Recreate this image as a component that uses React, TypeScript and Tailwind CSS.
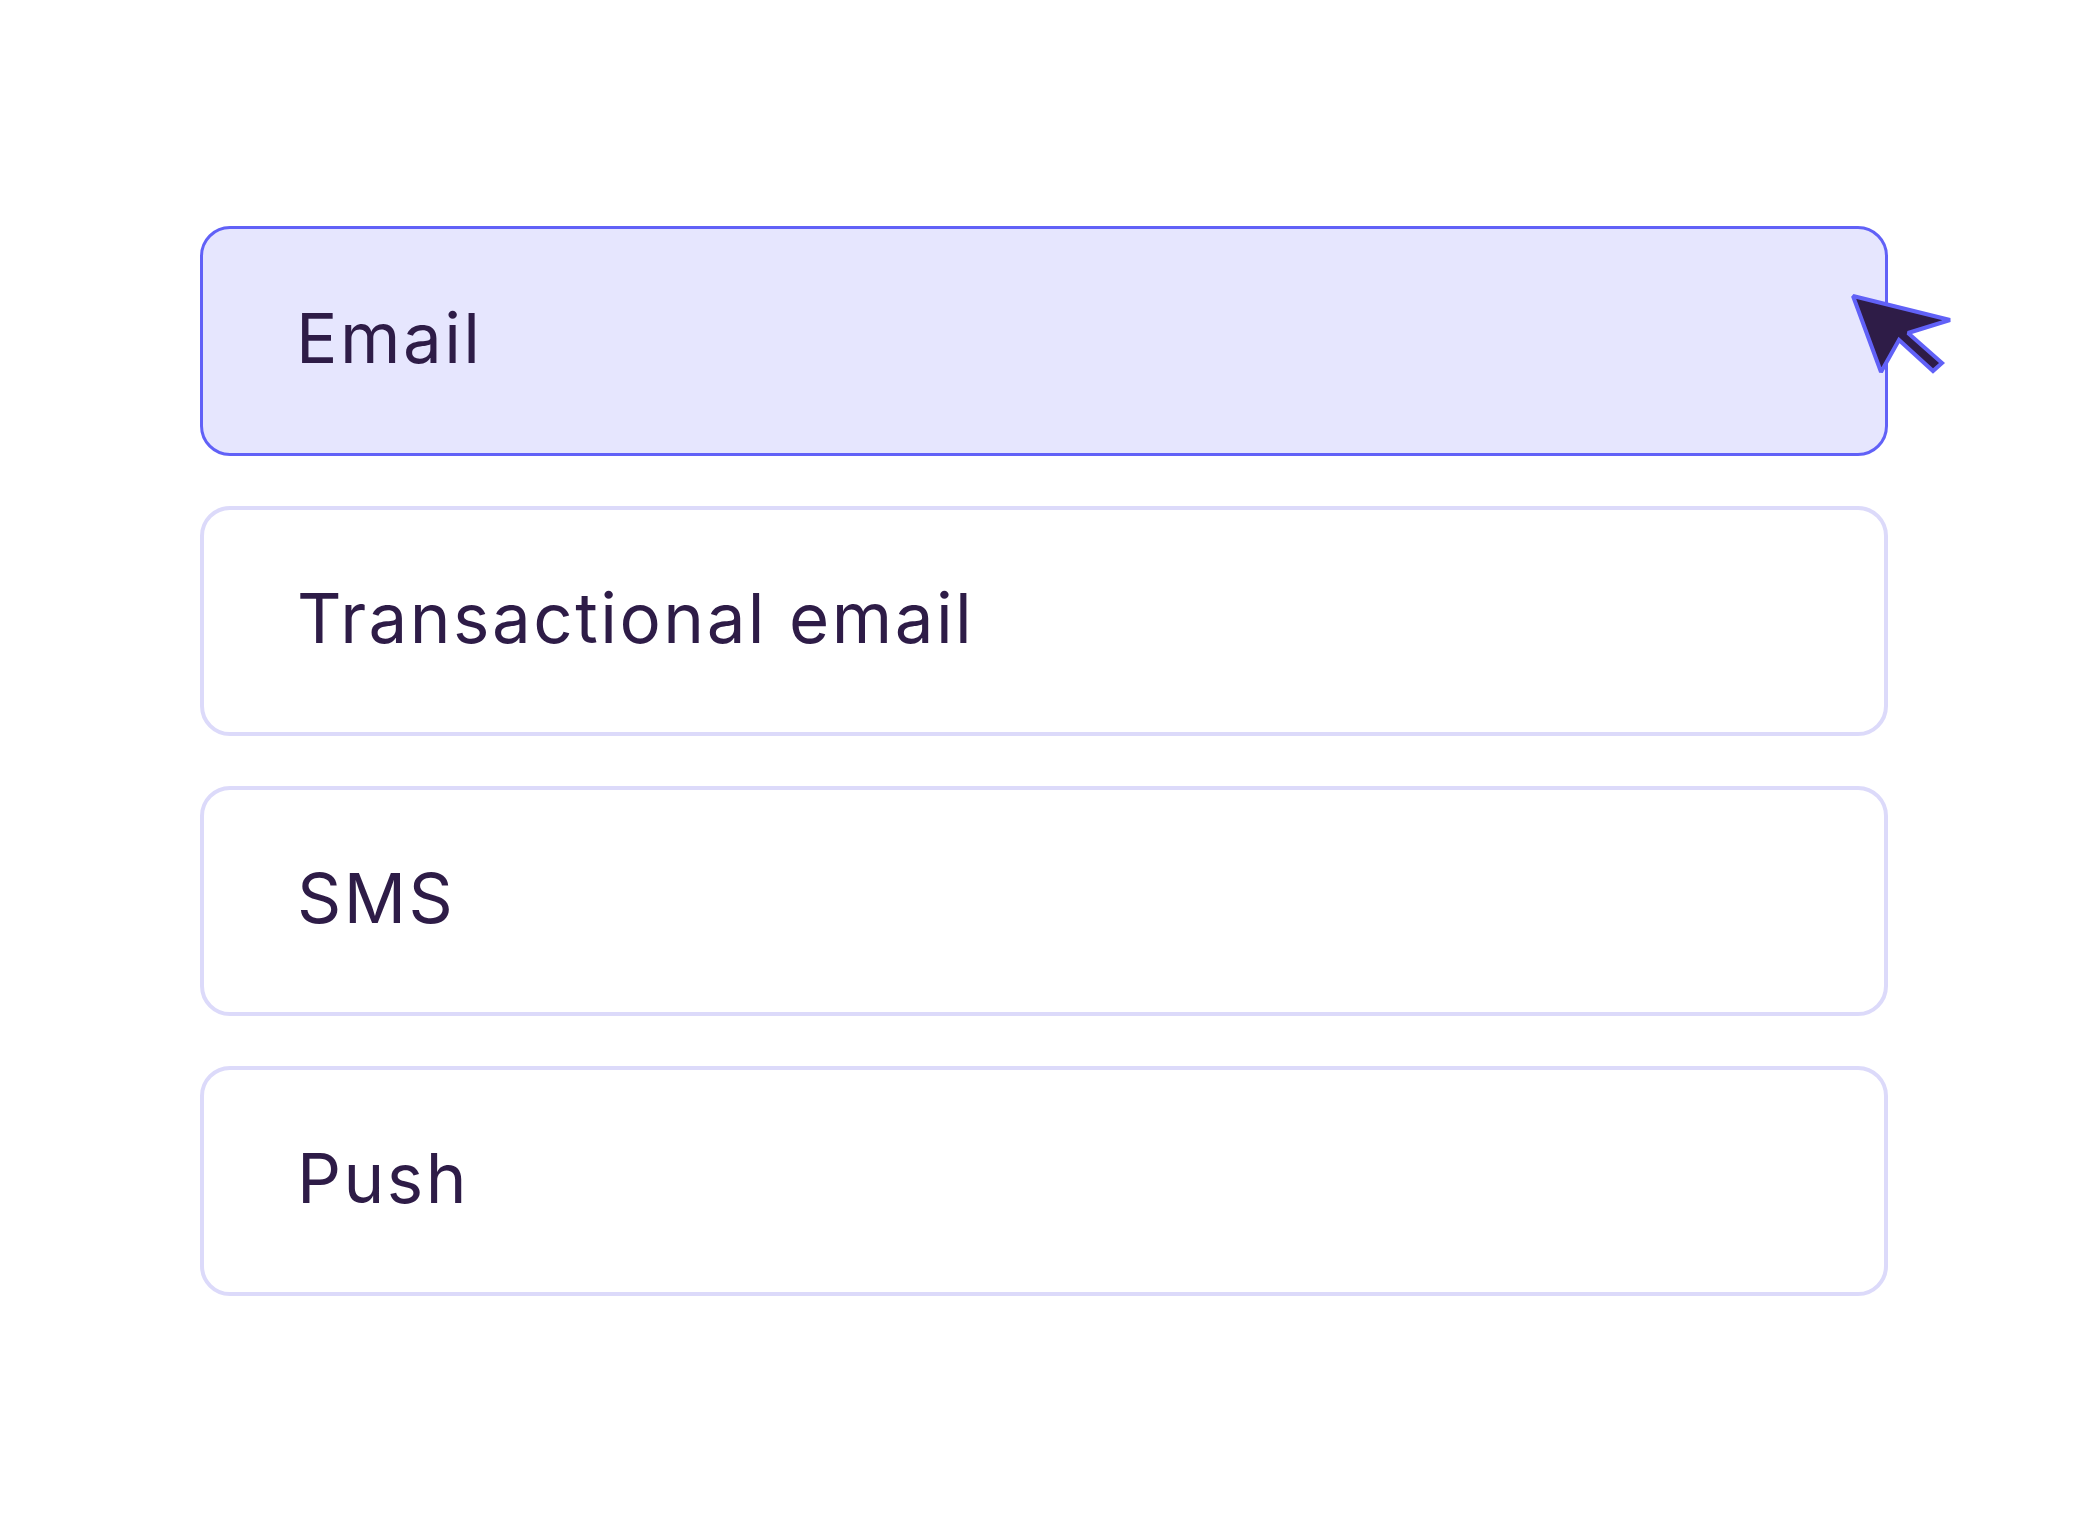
const channels = ["Email", "Transactional email", "SMS", "Push"];

function Cursor() {
  return (
    <svg
      className="absolute left-[1644px] top-[60px]"
      width="110"
      height="92"
      viewBox="0 0 110 92"
      fill="none"
    >
      <path
        d="M6 7 L103 31 L61 44 L95 74 L86 82 L52 51 L34 83 Z"
        fill="#2e1c47"
        stroke="#6161f7"
        strokeWidth="4"
        strokeLinejoin="miter"
        strokeMiterlimit="2"
      />
    </svg>
  );
}

export default function App() {
  return (
    <div className="min-h-[1524px] w-[2088px] bg-white pt-[226px] pl-[200px] font-['Inter',sans-serif]">
      <div className="flex w-[1688px] flex-col gap-[50px]">
        {channels.map((name, i) => (
          <div
            key={name}
            className={`relative flex h-[230px] items-center rounded-[30px] pl-[93px] ${
              i === 0
                ? "border-[3px] border-[#6161f7] bg-[#e6e6fe]"
                : "border-[4px] border-[#dcdafa] bg-white"
            }`}
          >
            <span className="pb-[6px] text-[69px] leading-none tracking-[2.5px] text-[#2e1c47]">
              {name}
            </span>
            {i === 0 && <Cursor />}
          </div>
        ))}
      </div>
    </div>
  );
}
